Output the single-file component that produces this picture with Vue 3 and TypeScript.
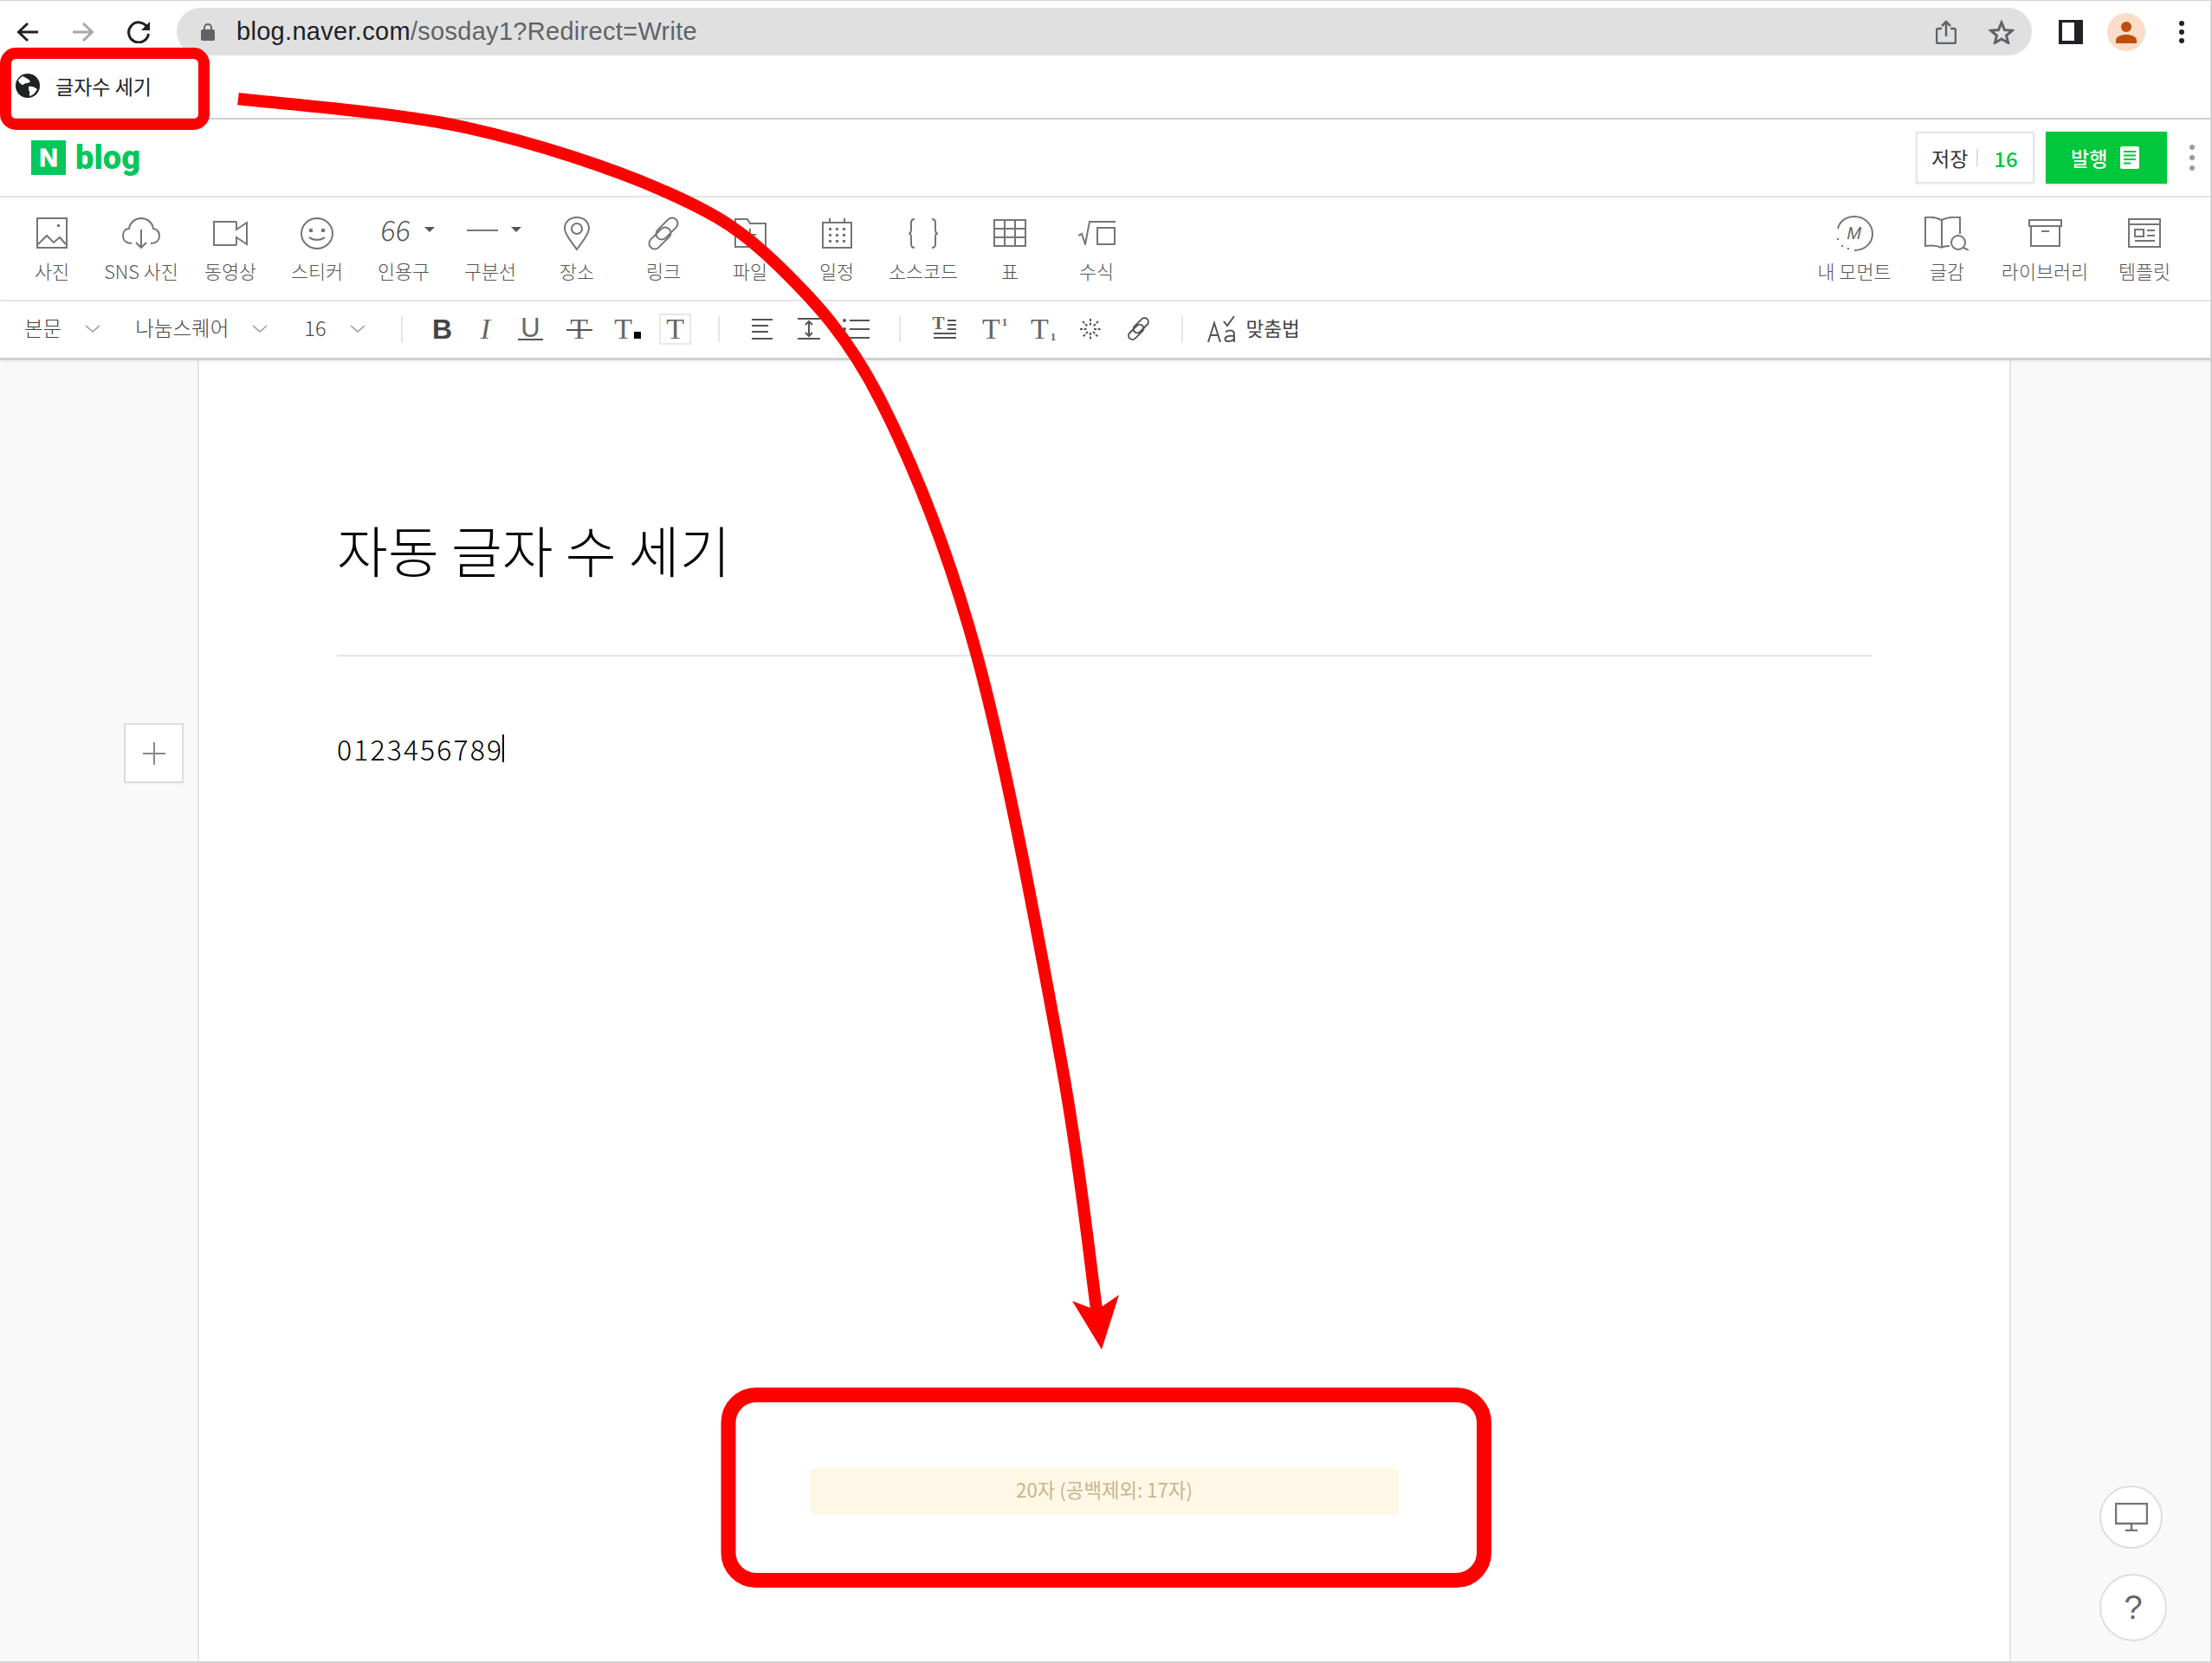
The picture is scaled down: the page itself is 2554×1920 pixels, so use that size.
<template>
  <div class="window">
    <div class="browser-bar">
      <svg class="nav-ico back" width="26" height="24" viewBox="0 0 26 24"><path d="M25 12H3M13 2L2.500 12L13 22" /></svg>
      <svg class="nav-ico fwd" width="26" height="24" viewBox="0 0 26 24"><path d="M1 12H23M13 2L23.500 12L13 22" /></svg>
      <svg class="nav-ico reload" width="28" height="26" viewBox="0 0 28 26"><path d="M23 7.500A11.500 11.500 0 1 0 24.500 15" /><path class="solid" d="M26 1V11H16Z" /></svg>
      <div class="omnibox">
        <svg class="lock" width="16" height="20" viewBox="0 0 16 20"><path d="M4 8V5a4 4 0 0 1 8 0V8" fill="none" stroke="#5f6368" stroke-width="2" /><rect y="7" width="16" height="13" rx="2" fill="#5f6368" /></svg>
        <span class="url"><b>blog.naver.com</b>/sosday1?Redirect=Write</span>
        <svg class="share" width="24" height="28" viewBox="0 0 24 28"><path d="M7 10H3a2 2 0 0 0-2 2V25a2 2 0 0 0 2 2H21a2 2 0 0 0 2-2V12a2 2 0 0 0-2-2H17M12 19V2M7 7L12 2L17 7" /></svg>
        <svg class="star" width="30" height="28" viewBox="0 0 30 28"><path d="M15 3L18.500 11.500L27.500 12.200L20.500 18L22.700 26.500L15 22L7.300 26.500L9.500 18L2.500 12.200L11.500 11.500Z" /></svg>
      </div>
      <div class="side-panel"><span></span></div>
      <div class="avatar">
        <svg width="26" height="26" viewBox="0 0 26 26"><circle cx="13" cy="7" r="6" /><path d="M1 26V23C1 18 7 16 13 16S25 18 25 23V26Z" /></svg>
      </div>
      <div class="kebab dark"><i></i><i></i><i></i></div>
    </div>

    <div class="bookmarks">
      <svg width="28" height="28" viewBox="0 0 28 28"><circle cx="14" cy="14" r="14" fill="#202124" /><path d="M8 3C12 5 15 6 17 9C15 12 11 10 9 13C6 13 4 10 3 8C4 6 6 4 8 3ZM15 15C18 14 22 15 25 18C23 22 20 25 16 26C16 23 17 21 15 19Z" fill="#fff" /></svg>
      <span>글자수 세기</span>
    </div>

    <header class="blog-header">
      <div class="logo-n">N</div>
      <div class="logo-text">blog</div>
      <div class="save-btn">
        <span class="save-label">저장</span>
        <i></i>
        <span class="save-count">16</span>
      </div>
      <div class="publish-btn">
        <span>발행</span>
        <svg width="22" height="26" viewBox="0 0 22 26"><rect width="22" height="26" rx="2" fill="#fff" /><path d="M4 6H18M4 10.500H18M4 15H18M4 19.500H12" stroke="#00c73c" stroke-width="2" /></svg>
      </div>
      <div class="kebab gray"><i></i><i></i><i></i></div>
    </header>

    <div class="tools">
      <div class="tool-group">
        <div v-for="item in leftTools" :key="item.label" class="tool" :style="{ width: item.w + 'px' }">
          <div class="tool-ico">
            <template v-if="item.kind === 'quote'">
              <span class="quote-mark">66</span><i class="caret"></i>
            </template>
            <template v-else-if="item.kind === 'divider'">
              <span class="dash"></span><i class="caret"></i>
            </template>
            <svg v-else :width="item.iw" :height="item.ih" :viewBox="`0 0 ${item.iw} ${item.ih}`">
              <path :d="item.d" />
              <path v-if="item.f" class="solid" :d="item.f" />
            </svg>
          </div>
          <span class="tool-label">{{ item.label }}</span>
        </div>
      </div>
      <div class="tool-group">
        <div v-for="item in rightTools" :key="item.label" class="tool" :style="{ width: item.w + 'px' }">
          <div class="tool-ico">
            <svg :width="item.iw" :height="item.ih" :viewBox="`0 0 ${item.iw} ${item.ih}`">
              <path :d="item.d" />
              <path v-if="item.f" class="solid" :d="item.f" />
            </svg>
            <span v-if="item.kind === 'moment'" class="moment-mark">M</span>
          </div>
          <span class="tool-label">{{ item.label }}</span>
        </div>
      </div>
    </div>

    <div class="format">
      <div class="drop d1"><span>본문</span><svg width="18" height="9" viewBox="0 0 18 9"><path d="M1 1L9 8L17 1" /></svg></div>
      <div class="drop d2"><span>나눔스퀘어</span><svg width="18" height="9" viewBox="0 0 18 9"><path d="M1 1L9 8L17 1" /></svg></div>
      <div class="drop d3"><span>16</span><svg width="18" height="9" viewBox="0 0 18 9"><path d="M1 1L9 8L17 1" /></svg></div>
      <i class="sep s1"></i>

      <div class="fmt w50 bold">B</div>
      <div class="fmt w50 ital">I</div>
      <div class="fmt w54 under"><span>U</span></div>
      <div class="fmt w58 serif strike"><span>T</span></div>
      <div class="fmt w54 serif"><span>T</span><i class="color-dot"></i></div>
      <div class="fmt w56"><div class="boxed serif">T</div></div>
      <i class="sep s2"></i>

      <div class="fmt w54">
        <svg width="24" height="24" viewBox="0 0 24 24"><path d="M0 1H24M0 8H19M0 15H19M0 23H24" /></svg>
      </div>
      <div class="fmt w54">
        <svg width="26" height="25" viewBox="0 0 26 25"><path d="M0 1H26M0 24H26M13 4V21M9 8L13 4L17 8M9 17L13 21L17 17" /></svg>
      </div>
      <div class="fmt w56">
        <svg width="31" height="24" viewBox="0 0 31 24"><path d="M8 2H31M8 12H31M8 22H31" /><path class="solid" d="M2 0a2 2 0 1 1 0 4a2 2 0 1 1 0-4ZM2 10a2 2 0 1 1 0 4a2 2 0 1 1 0-4ZM2 20a2 2 0 1 1 0 4a2 2 0 1 1 0-4Z" /></svg>
      </div>
      <i class="sep s3"></i>

      <div class="fmt w56 mini-t">
        <span class="te">T</span>
        <svg width="26" height="25" viewBox="0 0 26 25"><path d="M16 3H26M16 8H26M16 13H26M0 18H26M0 23H26" /></svg>
      </div>
      <div class="fmt w60 serif"><span>T</span><sup>1</sup></div>
      <div class="fmt w52 serif"><span>T</span><sub>1</sub></div>
      <div class="fmt w56">
        <svg width="24" height="24" viewBox="0 0 24 24"><path d="M12 0V8M12 16V24M0 12H8M16 12H24M3 3L9 9M15 15L21 21M21 3L15 9M9 15L3 21" stroke-dasharray="3 1.500" /></svg>
      </div>
      <div class="fmt w56">
        <svg width="25" height="27" viewBox="0 0 36 39"><path stroke-width="2.800" :d="linkPath" /></svg>
      </div>
      <i class="sep s4"></i>

      <div class="spell">
        <svg width="32" height="31" viewBox="0 0 32 31"><path d="M1 31L8 9L15 31M4 23H12M19 7L23 12L31 1M21 19C28 16 31 18 31 22V31M31 24C24 23 20 25 20.500 28C21 31 28 31 31 27" /></svg>
        <span>맞춤법</span>
      </div>
    </div>

    <main class="editor">
      <aside class="gutter">
        <button class="plus">
          <svg width="26" height="26" viewBox="0 0 26 26"><path d="M13 0V26M0 13H26" /></svg>
        </button>
      </aside>
      <section class="page">
        <h1 class="title">자동 글자 수 세기</h1>
        <div class="title-line"></div>
        <p class="body-text">0123456789<i class="cursor"></i></p>
        <div class="count-bar">20자 (공백제외: 17자)</div>
      </section>
      <aside class="side">
        <button class="round mon">
          <svg width="38" height="33" viewBox="0 0 38 33"><path d="M1 1H37V24H1ZM19 24V32M12 32H26" /></svg>
        </button>
        <button class="round help">?</button>
      </aside>
    </main>

    <svg class="marks" width="2554" height="1920" viewBox="0 0 2554 1920">
      <rect x="6.500" y="61.500" width="229" height="82" rx="12" class="mark" stroke-width="13" />
      <rect x="841" y="1610.500" width="872.500" height="214" rx="32" class="mark" stroke-width="17" />
      <path class="mark" stroke-width="14" :d="arrowPath" />
      <path fill="#ff0000" d="M1272 1558L1238 1502L1259 1510L1273 1508L1292 1495Z" />
    </svg>
  </div>
</template>

<script setup lang="ts">
interface Tool {
  label: string
  w: number
  iw?: number
  ih?: number
  d?: string
  f?: string
  kind?: 'quote' | 'divider' | 'moment'
}

const linkPath =
  'M20.600 24.600L32.600 12.600A6.500 6.500 0 0 0 23.400 3.400L11.400 15.400A6.500 6.500 0 0 0 20.600 24.600M24.600 23.600L12.600 35.600A6.500 6.500 0 0 1 3.400 26.400L15.400 14.400A6.500 6.500 0 0 1 24.600 23.600'

const leftTools: Tool[] = [
  { label: '사진', w: 100, iw: 36, ih: 36, d: 'M1 1H35V35H1ZM2 31L12 21L20 29L27 23L34 31', f: 'M24 8h3v3h-3Z' },
  { label: 'SNS 사진', w: 106, iw: 44, ih: 36, d: 'M11 30C4 30 1 26 1 21C1 16 4 13 8 13C9 6 15 1 22 1C29 1 35 6 36 13C40 13 43 17 43 21C43 26 40 30 33 30M22 14V35M16 29L22 35L28 29' },
  { label: '동영상', w: 100, iw: 40, ih: 29, d: 'M27 1H1V28H27M27 1V10L39 2V27L27 19V28' },
  { label: '스티커', w: 100, iw: 38, ih: 37, d: 'M19 1C29 1 37 9 37 18.500C37 28 29 36 19 36C9 36 1 28 1 18.500C1 9 9 1 19 1ZM10 23C15 27 23 27 28 23', f: 'M10 13h4v4h-4ZM24 13h4v4h-4Z' },
  { label: '인용구', w: 100, kind: 'quote' },
  { label: '구분선', w: 100, kind: 'divider' },
  { label: '장소', w: 100, iw: 30, ih: 39, d: 'M15 38C9 29 1 21 1 14C1 6 7 1 15 1C23 1 29 6 29 14C29 21 21 29 15 38ZM15 8A6 6 0 1 1 15 20A6 6 0 1 1 15 8Z' },
  { label: '링크', w: 100, iw: 36, ih: 39, d: linkPath },
  { label: '파일', w: 100, iw: 37, ih: 34, d: 'M1 33V1H15L18 6H36V33ZM18 12V26M11 19H25' },
  { label: '일정', w: 100, iw: 35, ih: 35, d: 'M1 5H34V34H1ZM9 0V5M26 0V5', f: 'M8 11h3v3H8ZM16 11h3v3h-3ZM24 11h3v3h-3ZM8 18h3v3H8ZM16 18h3v3h-3ZM24 18h3v3h-3ZM8 25h3v3H8ZM16 25h3v3h-3ZM24 25h3v3h-3Z' },
  { label: '소스코드', w: 100, iw: 34, ih: 35, d: 'M7 1C4 1 3 2 3 5V14C3 16 2 17 1 17.500C2 18 3 19 3 21V30C3 33 4 34 7 34M27 1C30 1 31 2 31 5V14C31 16 32 17 33 17.500C32 18 31 19 31 21V30C31 33 30 34 27 34' },
  { label: '표', w: 100, iw: 38, ih: 32, d: 'M1 1H37V31H1ZM13 1V31M25 1V31M1 11H37M1 21H37' },
  { label: '수식', w: 100, iw: 43, ih: 28, d: 'M0 17L4 15L8 27L13 1H43M22 8H42V27H22Z' }
]

const rightTools: Tool[] = [
  { label: '내 모먼트', w: 110, iw: 43, ih: 41, kind: 'moment', d: 'M2 15C4 6 12 1 21 1C33 1 42 10 42 21C42 32 33 40 21 40', f: 'M1 26h2v2H1ZM6 34h2v2H6ZM13 37h2v2h-2Z' },
  { label: '글감', w: 104, iw: 52, ih: 39, d: 'M20 36C14 33 8 33 1 34V1C8 0 14 1 20 4C26 1 33 0 41 1V20M20 4V36M20 36C22 34 25 34 29 34M39 22A8 8 0 1 1 39 38A8 8 0 1 1 39 22M45 36L51 39' },
  { label: '라이브러리', w: 122, iw: 39, ih: 32, d: 'M1 1H38V8H1ZM3 8V31H36V8M15 14H24' },
  { label: '템플릿', w: 108, iw: 38, ih: 34, d: 'M1 1H37V33H1ZM1 7H37M8 13H18V21H8ZM22 14H31M22 20H31M8 26H31' }
]

// points sampled along the red arrow, smoothed into one curve
const arrowPoints: [number, number][] = [
  [275, 114], [537, 147], [770, 222], [900, 308], [1017, 463], [1128, 757], [1225, 1224], [1266, 1511]
]

const arrowPath = arrowPoints.reduce((d, p, i, pts) => {
  if (i === 0) return `M${p[0]} ${p[1]}`
  const p0 = pts[Math.max(i - 2, 0)]
  const p1 = pts[i - 1]
  const p3 = pts[Math.min(i + 1, pts.length - 1)]
  const c1x = p1[0] + (p[0] - p0[0]) / 6
  const c1y = p1[1] + (p[1] - p0[1]) / 6
  const c2x = p[0] - (p3[0] - p1[0]) / 6
  const c2y = p[1] - (p3[1] - p1[1]) / 6
  return `${d}C${c1x} ${c1y} ${c2x} ${c2y} ${p[0]} ${p[1]}`
}, '')
</script>

<style>
html,
body {
  margin: 0;
  background: #fff;
}
</style>

<style scoped>
.window {
  position: relative;
  width: 2554px;
  height: 1920px;
  overflow: hidden;
  display: flex;
  flex-direction: column;
  box-sizing: border-box;
  background: #fff;
  border-top: 1px solid #d4d4d4;
  border-right: 2px solid #d4d4d4;
  border-bottom: 2px solid #d4d4d4;
  font-family: "Noto Sans CJK KR", "Noto Sans", sans-serif;
}

/* browser chrome */
.browser-bar {
  display: flex;
  align-items: center;
  height: 71px;
  flex: none;
}

.nav-ico path {
  fill: none;
  stroke-width: 3;
}

.nav-ico .solid {
  fill: #202124;
  stroke: none;
}

.back {
  margin-left: 19px;
  stroke: #202124;
}

.fwd {
  margin-left: 38px;
  stroke: #a8a8a8;
}

.reload {
  margin-left: 38px;
  stroke: #202124;
}

.omnibox {
  display: flex;
  align-items: center;
  width: 2142px;
  height: 55px;
  margin-left: 29px;
  border-radius: 28px;
  background: #e0e0e0;
}

.lock {
  margin-left: 28px;
}

.url {
  margin-left: 25px;
  font-family: "Liberation Sans", Arial, sans-serif;
  font-size: 29px;
  color: #5f6368;
  letter-spacing: 0.3px;
}

.url b {
  font-weight: 400;
  color: #202124;
}

.share {
  margin-left: auto;
  fill: none;
  stroke: #5f6368;
  stroke-width: 2.500;
}

.star {
  margin-left: 37px;
  margin-right: 20px;
  fill: none;
  stroke: #5f6368;
  stroke-width: 3;
}

.side-panel {
  width: 28px;
  height: 28px;
  margin-left: 31px;
  box-sizing: border-box;
  background: #202124;
  padding: 3px 10px 4px 4px;
  display: flex;
}

.side-panel span {
  flex: 1;
  background: #fff;
}

.avatar {
  width: 44px;
  height: 44px;
  margin-left: 28px;
  border-radius: 50%;
  background: #fbdcc8;
  display: flex;
  align-items: center;
  justify-content: center;
}

.avatar svg {
  fill: #c04e0c;
}

.kebab {
  display: flex;
  flex-direction: column;
  align-items: center;
}

.kebab i {
  width: 6px;
  height: 6px;
  border-radius: 50%;
}

.kebab.dark {
  margin-left: 39px;
  gap: 4px;
}

.kebab.dark i {
  background: #202124;
}

.bookmarks {
  display: flex;
  align-items: center;
  flex: none;
  height: 64px;
  box-sizing: border-box;
  padding: 0 0 10px 18px;
  font-size: 23px;
  color: #202124;
}

.bookmarks span {
  margin-left: 18px;
}

/* blog header */
.blog-header {
  display: flex;
  align-items: center;
  flex: none;
  height: 92px;
  box-sizing: border-box;
  padding-left: 36px;
  border-top: 2px solid #cfcfcf;
  border-bottom: 2px solid #e5e5e5;
}

.logo-n {
  width: 40px;
  height: 40px;
  background: #03c75a;
  color: #fff;
  font-family: "Liberation Sans", Arial, sans-serif;
  font-weight: 700;
  font-size: 30px;
  line-height: 40px;
  text-align: center;
  -webkit-text-stroke: 1px #fff;
}

.logo-text {
  margin-left: 11px;
  font-family: "Roboto", sans-serif;
  font-size: 38px;
  font-weight: 900;
  line-height: 40px;
  color: #03c75a;
}

.save-btn {
  display: flex;
  align-items: center;
  width: 137px;
  height: 60px;
  margin-left: auto;
  box-sizing: border-box;
  padding-left: 16px;
  border: 2px solid #e5e5e5;
  box-shadow: 0 1px 3px rgba(0, 0, 0, 0.08);
}

.save-label {
  font-size: 23px;
  color: #333;
}

.save-btn i {
  width: 2px;
  height: 20px;
  margin: 0 18px 0 10px;
  background: #ddd;
}

.save-count {
  font-size: 24px;
  font-weight: 500;
  color: #00c73c;
}

.publish-btn {
  display: flex;
  align-items: center;
  width: 140px;
  height: 60px;
  margin-left: 13px;
  box-sizing: border-box;
  padding-left: 29px;
  gap: 15px;
  background: #00c73c;
  color: #fff;
  font-size: 23px;
  font-weight: 500;
  box-shadow: 0 1px 3px rgba(0, 0, 0, 0.15);
}

.kebab.gray {
  margin-left: 26px;
  margin-right: 18px;
  gap: 6px;
}

.kebab.gray i {
  background: #9b9b9b;
}

/* insert toolbar */
.tools {
  display: flex;
  justify-content: space-between;
  flex: none;
  height: 120px;
  box-sizing: border-box;
  padding: 19px 22px 0 10px;
  border-bottom: 2px solid #e5e5e5;
}

.tool-group {
  display: flex;
}

.tool {
  display: flex;
  flex-direction: column;
  align-items: center;
}

.tool-ico {
  position: relative;
  display: flex;
  align-items: center;
  justify-content: center;
  height: 44px;
  fill: none;
  stroke: #757575;
  stroke-width: 2;
}

.tool-ico .solid {
  fill: #757575;
  stroke: none;
}

.tool-label {
  margin-top: 9px;
  font-size: 21.800px;
  line-height: 26px;
  font-weight: 300;
  color: #555;
  white-space: nowrap;
}

.quote-mark {
  margin-left: 10px;
  margin-top: -10px;
  font-size: 32px;
  font-weight: 300;
  line-height: 40px;
  color: #555;
  transform: skewX(-6deg);
}

.dash {
  width: 36px;
  height: 2px;
  margin-left: 8px;
  margin-top: -6px;
  background: #757575;
}

.caret {
  width: 0;
  height: 0;
  margin-left: 15px;
  margin-top: -8px;
  border-left: 6px solid transparent;
  border-right: 6px solid transparent;
  border-top: 6px solid #555;
}

.moment-mark {
  position: absolute;
  left: 50%;
  top: 50%;
  transform: translate(-50%, -50%) skewX(-12deg);
  font-family: "Liberation Sans", Arial, sans-serif;
  font-size: 20px;
  line-height: 20px;
  color: #666;
}

/* format toolbar */
.format {
  display: flex;
  align-items: center;
  flex: none;
  height: 68px;
  box-sizing: border-box;
  padding: 0 0 2px 28px;
  border-bottom: 3px solid #cfcfcf;
  box-shadow: 0 2px 4px rgba(0, 0, 0, 0.05);
  position: relative;
  z-index: 1;
  background: #fff;
  font-size: 23.500px;
  font-weight: 300;
  color: #444;
}

.drop {
  display: flex;
  align-items: center;
  gap: 27px;
}

.drop span {
  margin-top: -3px;
}

.drop svg {
  fill: none;
  stroke: #999;
  stroke-width: 1.500;
}

.d1 {
  margin-right: 40px;
}

.d2 {
  margin-right: 42px;
}

.d3 {
  margin-right: 41px;
}

.sep {
  width: 2px;
  height: 30px;
  background: #e5e5e5;
  flex: none;
}

.s1 {
  margin-right: 21px;
}

.s2 {
  margin-left: 21px;
  margin-right: 22px;
}

.s3 {
  margin-left: 21px;
  margin-right: 23px;
}

.s4 {
  margin-left: 21px;
  margin-right: 28px;
}

.fmt {
  display: flex;
  align-items: center;
  justify-content: center;
  flex: none;
  height: 40px;
  color: #666;
  font-size: 34px;
  line-height: 40px;
  fill: none;
  stroke: #555;
  stroke-width: 2;
}

.fmt .solid {
  fill: #555;
  stroke: none;
}

.w50 {
  width: 50px;
}

.w52 {
  width: 52px;
}

.w54 {
  width: 54px;
}

.w56 {
  width: 56px;
}

.w58 {
  width: 58px;
}

.w60 {
  width: 60px;
}

.serif {
  font-family: "Liberation Serif", serif;
  font-size: 34px;
  font-weight: 400;
}

.bold {
  font-family: "Liberation Sans", Arial, sans-serif;
  font-size: 32px;
  font-weight: 700;
  color: #444;
}

.ital {
  font-family: "Liberation Serif", serif;
  font-style: italic;
  font-size: 34px;
  font-weight: 400;
}

.under span {
  font-family: "Liberation Sans", Arial, sans-serif;
  font-size: 31px;
  line-height: 25px;
  padding: 0 3px;
  border-bottom: 2px solid #555;
}

.strike {
  position: relative;
}

.strike::after {
  content: "";
  position: absolute;
  left: 14px;
  right: 14px;
  top: 20px;
  height: 2px;
  background: #555;
}

.color-dot {
  width: 8px;
  height: 8px;
  margin-left: 2px;
  margin-top: 14px;
  background: #000;
}

.boxed {
  width: 37px;
  height: 36px;
  box-sizing: border-box;
  border: 2px solid #e8e8e8;
  text-align: center;
  line-height: 32px;
}

.mini-t {
  position: relative;
}

.te {
  position: absolute;
  left: 14px;
  top: -7px;
  font-family: "Liberation Serif", serif;
  font-size: 21px;
  font-weight: 700;
}

.fmt sup,
.fmt sub {
  font-size: 13px;
  line-height: 1;
  font-weight: 700;
  margin-left: 2px;
}

.fmt sup {
  margin-top: -16px;
}

.fmt sub {
  margin-top: 18px;
}

.spell {
  display: flex;
  align-items: center;
  gap: 13px;
  fill: none;
  stroke: #555;
  stroke-width: 2;
  color: #444;
  font-size: 22.500px;
  font-weight: 400;
}

.spell span {
  margin-top: -3px;
}

/* editor */
.editor {
  display: flex;
  flex: 1;
  min-height: 0;
  background: #f9f9f9;
}

.gutter {
  width: 228px;
  flex: none;
  box-sizing: border-box;
  padding: 419px 0 0 143px;
}

.plus {
  display: flex;
  align-items: center;
  justify-content: center;
  width: 69px;
  height: 69px;
  padding: 0;
  background: #fff;
  border: 2px solid #dcdcdc;
  box-shadow: 0 1px 2px rgba(0, 0, 0, 0.05);
  fill: none;
  stroke: #888;
  stroke-width: 2;
}

.page {
  display: flex;
  flex-direction: column;
  width: 2094px;
  flex: none;
  box-sizing: border-box;
  padding: 0 159px 0 159px;
  background: #fff;
  border-left: 2px solid #e5e5e5;
  border-right: 2px solid #e5e5e5;
}

.title {
  margin: 170px 0 0;
  font-size: 64px;
  line-height: 94px;
  font-weight: 300;
  color: #000;
}

.title-line {
  height: 2px;
  margin-top: 76px;
  background: #e5e5e5;
}

.body-text {
  display: flex;
  align-items: center;
  margin: 82px 0 0;
  font-size: 32px;
  line-height: 48px;
  font-weight: 300;
  letter-spacing: 2.100px;
  color: #000;
}

.cursor {
  width: 2px;
  height: 32px;
  margin-left: -1px;
  background: #000;
}

.count-bar {
  width: 680px;
  height: 54px;
  margin: auto 0 169px 546px;
  border-radius: 6px;
  background: #fff8e6;
  color: #c8b48f;
  font-size: 22.300px;
  line-height: 49px;
  text-align: center;
}

.side {
  display: flex;
  flex-direction: column;
  flex: 1;
  justify-content: flex-end;
  box-sizing: border-box;
  padding: 0 0 23px 102px;
}

.round {
  display: flex;
  align-items: center;
  justify-content: center;
  padding: 0;
  box-sizing: border-box;
  border-radius: 50%;
  background: #fff;
  border: 2px solid #dedede;
  fill: none;
  stroke: #757575;
  stroke-width: 2.500;
}

.mon {
  width: 73px;
  height: 73px;
  margin-bottom: 29px;
}

.help {
  width: 78px;
  height: 78px;
  font-family: "Liberation Sans", Arial, sans-serif;
  font-size: 38px;
  color: #666;
}

/* red annotations */
.marks {
  position: absolute;
  left: 0;
  top: -1px;
  z-index: 2;
  pointer-events: none;
}

.mark {
  fill: none;
  stroke: #ff0000;
}
</style>
